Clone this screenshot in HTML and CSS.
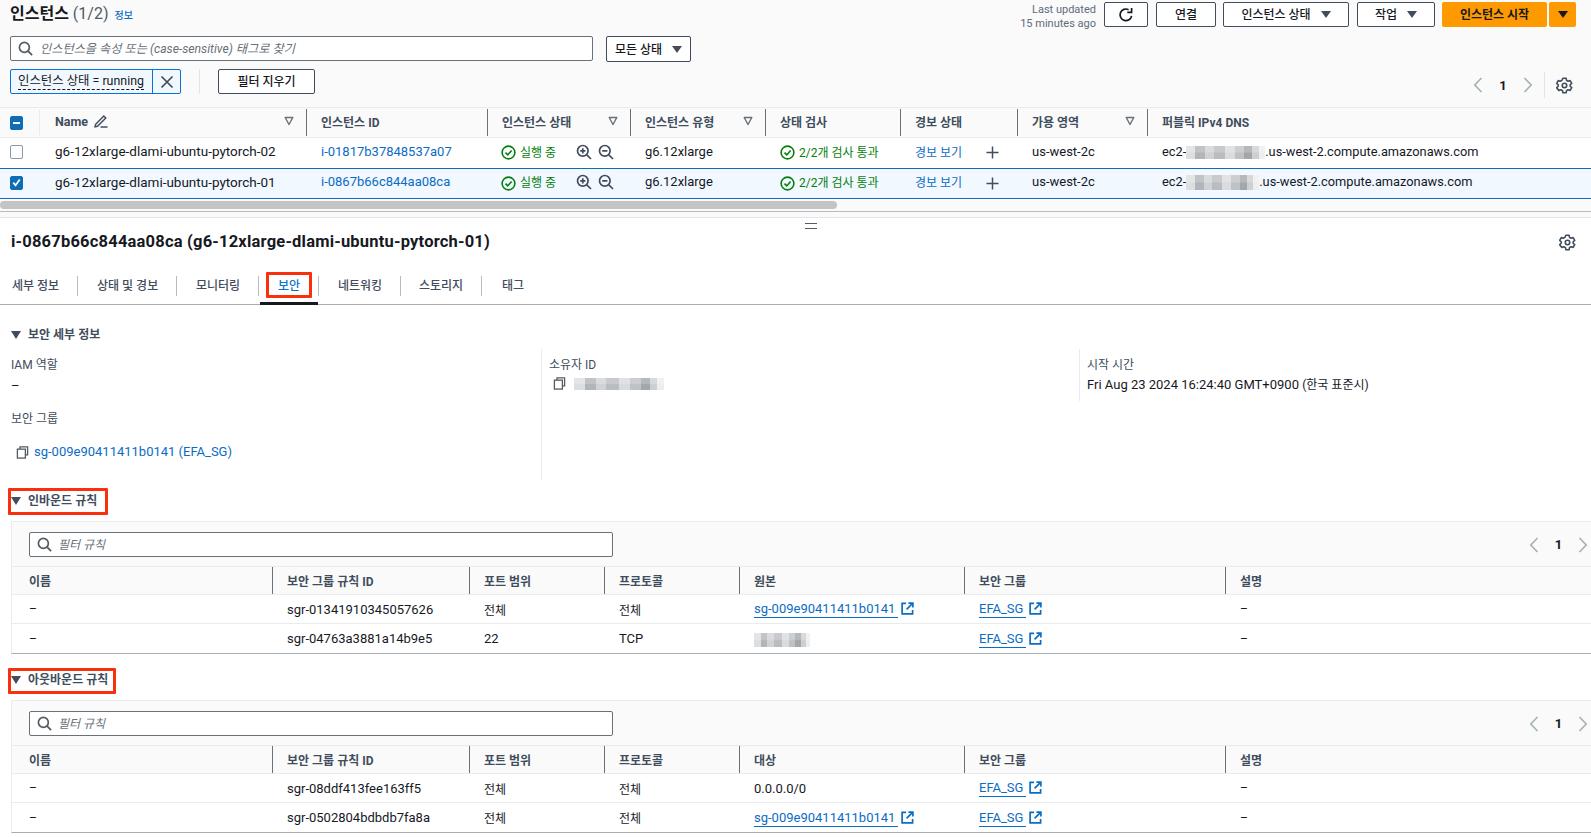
FILE: index.html
```html
<!DOCTYPE html>
<html lang="ko">
<head>
<meta charset="utf-8">
<title>인스턴스</title>
<link rel="stylesheet" href="styles.css">
</head>
<body>
<svg class="sprite" xmlns="http://www.w3.org/2000/svg">
  <symbol id="i-search" viewBox="0 0 16 16"><circle cx="6.8" cy="6.8" r="5.3" fill="none" stroke="currentColor" stroke-width="1.8"/><path d="M10.8 10.8 15 15" fill="none" stroke="currentColor" stroke-width="2"/></symbol>
  <symbol id="i-refresh" viewBox="0 0 16 16"><path d="M13.6 8.8A5.8 5.8 0 1 1 10.6 2.7" fill="none" stroke="currentColor" stroke-width="1.7"/><path d="M13.6 1v4.3H9.3" fill="none" stroke="currentColor" stroke-width="1.7"/></symbol>
  <symbol id="i-gear" viewBox="0 0 16 16"><path d="M6.5 1.2h3l.4 2 1.4.8 2-.6 1.5 2.6-1.5 1.3v1.4l1.5 1.3-1.5 2.6-2-.6-1.4.8-.4 2h-3l-.4-2-1.4-.8-2 .6L.6 10l1.5-1.3V7.3L.6 6l1.5-2.6 2 .6 1.4-.8z" fill="none" stroke="currentColor" stroke-width="1.5" stroke-linejoin="round"/><circle cx="8" cy="8" r="2.1" fill="none" stroke="currentColor" stroke-width="1.5"/></symbol>
  <symbol id="i-check" viewBox="0 0 16 16"><circle cx="8" cy="8" r="6.8" fill="none" stroke="currentColor" stroke-width="1.7"/><path d="M4.8 8.2 7.2 10.6 11.3 5.8" fill="none" stroke="currentColor" stroke-width="1.7"/></symbol>
  <symbol id="i-zoomin" viewBox="0 0 16 16"><circle cx="6.8" cy="6.8" r="5.3" fill="none" stroke="currentColor" stroke-width="1.7"/><path d="M10.8 10.8 15 15M4.2 6.8h5.2M6.8 4.2v5.2" fill="none" stroke="currentColor" stroke-width="1.7"/></symbol>
  <symbol id="i-zoomout" viewBox="0 0 16 16"><circle cx="6.8" cy="6.8" r="5.3" fill="none" stroke="currentColor" stroke-width="1.7"/><path d="M10.8 10.8 15 15M4.2 6.8h5.2" fill="none" stroke="currentColor" stroke-width="1.7"/></symbol>
  <symbol id="i-plus" viewBox="0 0 14 14"><path d="M7 .5v13M.5 7h13" fill="none" stroke="currentColor" stroke-width="1.6"/></symbol>
  <symbol id="i-close" viewBox="0 0 14 14"><path d="M1.5 1.5l11 11M12.5 1.5l-11 11" fill="none" stroke="currentColor" stroke-width="1.7"/></symbol>
  <symbol id="i-copy" viewBox="0 0 14 14"><path d="M4.3 3.2V1h8.2v8.6h-2.2" fill="none" stroke="currentColor" stroke-width="1.4"/><rect x="1.5" y="3.4" width="8.6" height="9.6" fill="none" stroke="currentColor" stroke-width="1.4"/></symbol>
  <symbol id="i-ext" viewBox="0 0 14 14"><path d="M5.5 1.5H1.2v11.300h11.300V8.500" fill="none" stroke="currentColor" stroke-width="1.8"/><path d="M8 1.200h4.800V6M12.500 1.500 6 8" fill="none" stroke="currentColor" stroke-width="1.8"/></symbol>
  <symbol id="i-pencil" viewBox="0 0 14 14"><path d="M1.5 10.5 9.8 1.9l2 2-8.3 8.4-2.5.5zM6.5 13h7" fill="none" stroke="currentColor" stroke-width="1.4"/></symbol>
  <symbol id="i-prev" viewBox="0 0 10 16"><path d="M8.5 1 1.8 8l6.7 7" fill="none" stroke="currentColor" stroke-width="1.6"/></symbol>
  <symbol id="i-next" viewBox="0 0 10 16"><path d="M1.5 1l6.7 7-6.7 7" fill="none" stroke="currentColor" stroke-width="1.6"/></symbol>
  <symbol id="i-sort" viewBox="0 0 10 10"><path d="M1.2 1.5h7.6L5 8.5z" fill="none" stroke="currentColor" stroke-width="1.4" stroke-linejoin="round"/></symbol>
</svg>

<section class="top">
  <header class="bar">
    <h1 class="page-title">인스턴스 <span class="count">(1/2)</span></h1>
    <a class="info">정보</a>
    <div class="actions">
      <div class="updated">Last updated<br>15 minutes ago</div>
      <button class="btn btn-refresh"><svg class="ic16"><use href="#i-refresh"/></svg></button>
      <button class="btn btn-connect">연결</button>
      <button class="btn btn-state">인스턴스 상태<i class="caret"></i></button>
      <button class="btn btn-work">작업<i class="caret"></i></button>
      <button class="btn-primary">인스턴스 시작</button>
      <button class="btn-primary-split"><i class="caret caret-dark"></i></button>
    </div>
  </header>
  <div class="search-row">
    <div class="search search-main"><svg class="ic15"><use href="#i-search"/></svg><span class="placeholder placeholder-main">인스턴스을 속성 또는 (case-sensitive) 태그로 찾기</span></div>
    <button class="btn btn-all">모든 상태<i class="caret"></i></button>
  </div>
  <div class="chip-row">
    <div class="chip"><span class="chip-label"><span class="chip-text">인스턴스 상태 = running</span></span><span class="chip-x"><svg class="ic14"><use href="#i-close"/></svg></span></div>
    <span class="chip-sep"></span>
    <button class="btn btn-clear">필터 지우기</button>
    <div class="pager pager-top">
      <svg class="pg-arrow"><use href="#i-prev"/></svg><b class="pg-num">1</b><svg class="pg-arrow"><use href="#i-next"/></svg>
      <span class="pg-sep"></span>
      <svg class="ic17 gear"><use href="#i-gear"/></svg>
    </div>
  </div>

  <div class="inst-table">
    <div class="inst-row inst-head">
      <div class="th th-check"><span class="cb cb-mixed"></span></div>
      <div class="th"><div class="th-in th-first">Name <svg class="ic14 pencil"><use href="#i-pencil"/></svg><svg class="sort"><use href="#i-sort"/></svg></div></div>
      <div class="th"><div class="th-in">인스턴스 ID</div></div>
      <div class="th"><div class="th-in">인스턴스 상태<svg class="sort"><use href="#i-sort"/></svg></div></div>
      <div class="th"><div class="th-in">인스턴스 유형<svg class="sort"><use href="#i-sort"/></svg></div></div>
      <div class="th"><div class="th-in">상태 검사</div></div>
      <div class="th"><div class="th-in">경보 상태</div></div>
      <div class="th"><div class="th-in">가용 영역<svg class="sort"><use href="#i-sort"/></svg></div></div>
      <div class="th"><div class="th-in">퍼블릭 IPv4 DNS</div></div>
    </div>
    <div class="inst-row inst-body">
      <div class="td td-check"><span class="cb"></span></div>
      <div class="td val name-val">g6-12xlarge-dlami-ubuntu-pytorch-02</div>
      <div class="td val"><a class="link">i-01817b37848537a07</a></div>
      <div class="td ok ok-state"><svg class="ic15"><use href="#i-check"/></svg><span class="ok-text">실행 중</span><svg class="ic16 zoom zoom-first"><use href="#i-zoomin"/></svg><svg class="ic16 zoom"><use href="#i-zoomout"/></svg></div>
      <div class="td val">g6.12xlarge</div>
      <div class="td ok"><svg class="ic15"><use href="#i-check"/></svg><span class="ok-text">2/2개 검사 통과</span></div>
      <div class="td"><a class="link link-ko">경보 보기</a><svg class="ic13 plus"><use href="#i-plus"/></svg></div>
      <div class="td val">us-west-2c</div>
      <div class="td val dns">ec2-<span class="blur blur-dns1"></span>.us-west-2.compute.amazonaws.com</div>
    </div>
    <div class="inst-row inst-body inst-selected">
      <div class="td td-check"><span class="cb cb-on"><svg viewBox="0 0 12 12"><path d="M2.5 6.2 5 9 9.5 2.8" fill="none" stroke="#fff" stroke-width="1.9"/></svg></span></div>
      <div class="td val name-val">g6-12xlarge-dlami-ubuntu-pytorch-01</div>
      <div class="td val"><a class="link">i-0867b66c844aa08ca</a></div>
      <div class="td ok ok-state"><svg class="ic15"><use href="#i-check"/></svg><span class="ok-text">실행 중</span><svg class="ic16 zoom zoom-first"><use href="#i-zoomin"/></svg><svg class="ic16 zoom"><use href="#i-zoomout"/></svg></div>
      <div class="td val">g6.12xlarge</div>
      <div class="td ok"><svg class="ic15"><use href="#i-check"/></svg><span class="ok-text">2/2개 검사 통과</span></div>
      <div class="td"><a class="link link-ko">경보 보기</a><svg class="ic13 plus"><use href="#i-plus"/></svg></div>
      <div class="td val">us-west-2c</div>
      <div class="td val dns">ec2-<span class="blur blur-dns2"></span>.us-west-2.compute.amazonaws.com</div>
    </div>
  </div>
  <div class="scrollbar"><div class="scroll-thumb"></div></div>
</section>

<section class="detail">
  <div class="handle"><span class="handle-lines"></span></div>
  <div class="detail-title">
    <h2 class="detail-h">i-0867b66c844aa08ca (g6-12xlarge-dlami-ubuntu-pytorch-01)</h2>
    <svg class="ic17 gear"><use href="#i-gear"/></svg>
  </div>
  <nav class="tabs">
    <a class="tab tab-1">세부 정보</a>
    <a class="tab tab-2">상태 및 경보</a>
    <a class="tab tab-3">모니터링</a>
    <a class="tab tab-4 tab-active"><span class="tab-mark">보안</span></a>
    <a class="tab tab-5">네트워킹</a>
    <a class="tab tab-6">스토리지</a>
    <a class="tab tab-7">태그</a>
  </nav>

  <h3 class="sec-head sec-plain"><i class="caret caret-sec"></i>보안 세부 정보</h3>
  <div class="kv">
    <div class="kv-col kv-1">
      <div class="k">IAM 역할</div>
      <div class="v v-dash">–</div>
      <div class="k k-second">보안 그룹</div>
      <div class="v v-sg"><svg class="ic13 copy"><use href="#i-copy"/></svg><a class="link">sg-009e90411411b0141 (EFA_SG)</a></div>
    </div>
    <div class="kv-col kv-2">
      <div class="k">소유자 ID</div>
      <div class="v v-owner"><svg class="ic13 copy"><use href="#i-copy"/></svg><span class="blur blur-owner"></span></div>
    </div>
    <div class="kv-col kv-3">
      <div class="k">시작 시간</div>
      <div class="v v-date">Fri Aug 23 2024 16:24:40 GMT+0900 <span class="ko-small">(한국 표준시)</span></div>
    </div>
  </div>

  <h3 class="sec-head sec-marked sec-in"><i class="caret caret-sec"></i>인바운드 규칙</h3>
  <div class="panel">
    <div class="panel-bar">
      <div class="search search-rule"><svg class="ic15"><use href="#i-search"/></svg><span class="placeholder">필터 규칙</span></div>
      <div class="pager pager-rule"><svg class="pg-arrow"><use href="#i-prev"/></svg><b class="pg-num">1</b><svg class="pg-arrow"><use href="#i-next"/></svg></div>
    </div>
    <div class="rule-row rule-head">
      <div class="rh rh-first">이름</div>
      <div class="rh"><div class="th-in">보안 그룹 규칙 ID</div></div>
      <div class="rh"><div class="th-in">포트 범위</div></div>
      <div class="rh"><div class="th-in">프로토콜</div></div>
      <div class="rh"><div class="th-in">원본</div></div>
      <div class="rh"><div class="th-in">보안 그룹</div></div>
      <div class="rh"><div class="th-in">설명</div></div>
    </div>
    <div class="rule-row rule-body">
      <div class="rd rd-first">–</div>
      <div class="rd val">sgr-01341910345057626</div>
      <div class="rd">전체</div>
      <div class="rd">전체</div>
      <div class="rd val"><a class="ext-link"><span>sg-009e90411411b0141</span><svg class="ic13"><use href="#i-ext"/></svg></a></div>
      <div class="rd val"><a class="ext-link"><span>EFA_SG</span><svg class="ic13"><use href="#i-ext"/></svg></a></div>
      <div class="rd">–</div>
    </div>
    <div class="rule-row rule-body rule-last">
      <div class="rd rd-first">–</div>
      <div class="rd val">sgr-04763a3881a14b9e5</div>
      <div class="rd val">22</div>
      <div class="rd val">TCP</div>
      <div class="rd val"><span class="blur blur-src"></span></div>
      <div class="rd val"><a class="ext-link"><span>EFA_SG</span><svg class="ic13"><use href="#i-ext"/></svg></a></div>
      <div class="rd">–</div>
    </div>
  </div>

  <h3 class="sec-head sec-marked sec-out"><i class="caret caret-sec"></i>아웃바운드 규칙</h3>
  <div class="panel">
    <div class="panel-bar">
      <div class="search search-rule"><svg class="ic15"><use href="#i-search"/></svg><span class="placeholder">필터 규칙</span></div>
      <div class="pager pager-rule"><svg class="pg-arrow"><use href="#i-prev"/></svg><b class="pg-num">1</b><svg class="pg-arrow"><use href="#i-next"/></svg></div>
    </div>
    <div class="rule-row rule-head">
      <div class="rh rh-first">이름</div>
      <div class="rh"><div class="th-in">보안 그룹 규칙 ID</div></div>
      <div class="rh"><div class="th-in">포트 범위</div></div>
      <div class="rh"><div class="th-in">프로토콜</div></div>
      <div class="rh"><div class="th-in">대상</div></div>
      <div class="rh"><div class="th-in">보안 그룹</div></div>
      <div class="rh"><div class="th-in">설명</div></div>
    </div>
    <div class="rule-row rule-body">
      <div class="rd rd-first">–</div>
      <div class="rd val">sgr-08ddf413fee163ff5</div>
      <div class="rd">전체</div>
      <div class="rd">전체</div>
      <div class="rd val">0.0.0.0/0</div>
      <div class="rd val"><a class="ext-link"><span>EFA_SG</span><svg class="ic13"><use href="#i-ext"/></svg></a></div>
      <div class="rd">–</div>
    </div>
    <div class="rule-row rule-body rule-last">
      <div class="rd rd-first">–</div>
      <div class="rd val">sgr-0502804bdbdb7fa8a</div>
      <div class="rd">전체</div>
      <div class="rd">전체</div>
      <div class="rd val"><a class="ext-link"><span>sg-009e90411411b0141</span><svg class="ic13"><use href="#i-ext"/></svg></a></div>
      <div class="rd val"><a class="ext-link"><span>EFA_SG</span><svg class="ic13"><use href="#i-ext"/></svg></a></div>
      <div class="rd">–</div>
    </div>
  </div>
</section>
</body>
</html>
```
FILE: styles.css
```css
* { box-sizing: border-box; }
html, body { margin: 0; padding: 0; height: 837px; overflow: hidden; }
body {
  font-family: Roboto, "Noto Sans CJK KR", sans-serif;
  font-size: 12px;
  color: #16191f;
  background: #fff;
}
.sprite { width: 0; height: 0; position: absolute; }
h1, h2, h3 { margin: 0; }
svg { flex: none; display: block; }
.ic13 { width: 13px; height: 13px; }
.ic14 { width: 14px; height: 14px; }
.ic15 { width: 15px; height: 15px; }
.ic16 { width: 16px; height: 16px; }
.ic17 { width: 17px; height: 17px; }

/* top list panel */
.top { height: 218px; background: #fafafa; border-bottom: 1px solid #e3e5e7; }
.bar { height: 36px; display: flex; align-items: flex-start; padding: 0 15px 0 10px; }
.page-title { font-size: 16px; font-weight: 700; line-height: 28px; color: #16191f; }
.count { font-weight: 400; color: #545b64; }
.info { font-size: 10px; color: #0b6cc4; margin: 7px 0 0 6px; line-height: 18px; font-weight: 500; }
.actions { margin-left: auto; display: flex; align-items: flex-start; padding-top: 2px; }
.updated { font-size: 11px; line-height: 14px; color: #5f6b7a; text-align: right; margin-right: 8px; margin-top: 1px; }
.btn {
  height: 25px; border: 1px solid #414d5c; border-radius: 2px; background: #fff;
  font: 500 12px Roboto, "Noto Sans CJK KR", sans-serif; color: #16191f;
  display: flex; align-items: center; justify-content: center; padding: 0 0 2px;
}
.btn-refresh { width: 44px; margin-right: 8px; padding: 0; }
.btn-connect { width: 60px; margin-right: 7px; }
.btn-state { width: 126px; margin-right: 8px; }
.btn-work { width: 78px; margin-right: 7px; }
.btn-primary, .btn-primary-split {
  height: 25px; border: 0; border-radius: 2px; background: #f90;
  font: 700 12px Roboto, "Noto Sans CJK KR", sans-serif; color: #16191f; padding: 0 0 2px;
  display: flex; align-items: center; justify-content: center;
}
.btn-primary { width: 105px; margin-right: 2px; }
.btn-primary-split { width: 27px; padding: 0; }
.caret { display: inline-block; width: 0; height: 0; border: 5px solid transparent; border-top: 7px solid #414d5c; border-bottom: 0; margin-left: 10px; margin-top: 2px; }
.caret-dark { border-top-color: #16191f; margin-left: 0; margin-top: 0; }
.caret-sec { margin: 0 7px 0 0; border-width: 5px; border-top-width: 8px; border-bottom-width: 0; }

.search-row { height: 33px; display: flex; padding-left: 10px; }
.search {
  height: 25px; border: 1px solid #687078; border-radius: 2px; background: #fff;
  display: flex; align-items: center; padding-left: 7px; color: #545b64;
}
.search-main { width: 583px; margin-right: 13px; }
.search-rule { width: 584px; }
.placeholder { font-style: italic; font-size: 12px; color: #687078; margin: 0 0 2px 6px; }
.placeholder-main { font-size: 12.2px; margin-left: 7px; }
.btn-all { width: 85px; height: 26px; }

.chip-row { height: 38px; display: flex; align-items: flex-start; padding-left: 10px; }
.chip { width: 171px; height: 25px; display: flex; border: 1px solid #0972d3; border-radius: 2px; background: #f1f8fd; }
.chip-label { flex: 1; display: flex; align-items: flex-start; padding: 2px 0 0 7px; border-right: 1px solid #0972d3; }
.chip-text { font-size: 12.4px; line-height: 17px; border-bottom: 1px dashed #16191f; white-space: nowrap; font-weight: 400; }
.chip-x { width: 27px; display: flex; align-items: center; justify-content: center; color: #414d5c; }
.chip-sep { width: 1px; height: 25px; background: #e3e5e7; margin: 0 18px; }
.btn-clear { width: 97px; }
.pager { display: flex; align-items: center; }
.pager-top { margin-left: auto; margin-top: 3px; height: 26px; padding-right: 18px; }
.pg-arrow { width: 10px; height: 16px; color: #a3b0b5; }
.pg-num { width: 40px; text-align: center; font-size: 13px; font-weight: 700; color: #16191f; }
.pg-sep { width: 1px; height: 26px; background: #e3e5e7; margin: 0 11px; }
.gear { color: #414d5c; }

/* instances table */
.inst-table { border-top: 1px solid #e9ebed; }
.inst-row { display: grid; grid-template-columns: 40px 266px 181px 143px 135px 135px 117px 130px 1fr; }
.inst-head { height: 30px; border-bottom: 1px solid #e9ebed; }
.th { display: flex; align-items: center; min-width: 0; }
.th-check { padding-left: 10px; position: relative; }
.th-check::after { content: ""; position: absolute; right: 0; top: 2px; height: 25px; width: 1px; background: #e9ebed; }
.th-in {
  flex: 1; height: 27px; display: flex; align-items: center; padding: 0 15px 0 14px;
  border-left: 1px solid #687078; font-weight: 700; color: #414d5c; font-size: 12px;
  justify-content: flex-start; white-space: nowrap; min-width: 0;
}
.inst-head .th-in { padding-bottom: 3px; }
.th-first { border-left: 0; padding-left: 15px; font-size: 12.5px; }
.pencil { margin-left: 6px; color: #414d5c; }
.sort { width: 10px; height: 10px; margin-left: auto; color: #687078; margin-right: -3px; }
.inst-body { height: 30px; background: #fff; }
.inst-selected { height: 31px; background: #f1f8ff; border-top: 1px solid #0f6cb5; border-bottom: 1px solid #0f6cb5; }
.td { display: flex; align-items: center; padding: 0 0 4px 15px; white-space: nowrap; min-width: 0; }
.td-check { padding: 0 0 2px 10px; }
.val { font-size: 13px; }
.name-val { font-size: 13.5px; }
.dns { font-size: 12.8px; }
.cb { width: 13px; height: 14px; border: 1px solid #8d99a8; border-radius: 2px; background: #fff; display: block; }
.cb-mixed { background: #0f6cb5; border-color: #0f6cb5; position: relative; }
.cb-mixed::after { content: ""; position: absolute; left: 2px; right: 2px; top: 5px; height: 2px; background: #fff; }
.cb-on { background: #0f6cb5; border-color: #0f6cb5; }
.link { color: #0b6cc4; font-size: inherit; }
.link-ko { font-size: 12px; }
.ok { color: #037f0c; font-size: 12px; padding-left: 15px; }
.ok-state { padding-left: 14px; }
.ok .ic15 { margin-top: 3px; }
.ok-text { margin-left: 4px; }
.zoom { color: #414d5c; margin: 1px 0 0 6px; }
.zoom-first { margin-left: 20px; }
.plus { color: #414d5c; margin: 3px 0 0 24px; }
.blur {
  display: inline-block; filter: blur(.7px);
  background:
    linear-gradient(180deg, rgba(255,255,255,.2) 0 45%, rgba(255,255,255,0) 55%),
    linear-gradient(90deg, #dcdee0 0 12%, #b2b5b9 12% 24%, #d0d2d4 24% 36%, #babdc0 36% 50%, #d9dbdd 50% 62%, #bfc2c5 62% 74%, #a3a7ab 74% 84%, #cdcfd1 84% 92%, #eceeef 92%);
}
.blur-dns1 { width: 79px; height: 13px; margin-top: 2px; }
.blur-dns2 { width: 73px; height: 15px; margin-top: 2px; }
.blur-owner { width: 90px; height: 12px; margin-left: 8px; }
.blur-src { width: 56px; height: 14px; margin-top: 2px; }

.scrollbar { height: 13px; padding-top: 1px; border-bottom: 1px solid #b6bcc4; }
.scroll-thumb { width: 837px; height: 8px; margin-top: 1px; border-radius: 4px; background: #c4c4c4; }

/* split panel */
.handle { height: 13px; display: flex; justify-content: center; padding: 5px 0 0 31px; }
.handle-lines { width: 12px; height: 6px; border-top: 1.5px solid #545b64; border-bottom: 1.5px solid #545b64; }
.detail-title { height: 22px; display: flex; align-items: center; padding: 0 15px 0 11px; justify-content: space-between; }
.detail-h { font-size: 16.5px; letter-spacing: .2px; font-weight: 700; line-height: 22px; }

.tabs { height: 52px; padding-top: 14px; display: flex; border-bottom: 1px solid #a5adb5; }
.tab { display: flex; align-items: center; height: 37px; padding: 0 0 2px 20px; font-size: 12px; font-weight: 500; color: #414d5c; position: relative; white-space: nowrap; }
.tab::after { content: ""; position: absolute; right: 0; top: 9px; height: 20px; width: 1px; background: #b6bcc4; }
.tab-1 { width: 78px; padding-left: 12px; }
.tab-2 { width: 99px; padding-left: 19px; }
.tab-3 { width: 82px; padding-left: 19px; }
.tab-4 { width: 60px; padding: 0 0 0 7px; color: #0972d3; }
.tab-5 { width: 82px; padding-left: 19px; }
.tab-6 { width: 81px; padding-left: 18px; }
.tab-7 { width: 60px; }
.tab-7::after { display: none; }
.tab-active::before { content: ""; position: absolute; left: 1px; right: 1px; bottom: -1px; height: 3px; background: #16191f; }
.tab-mark { border: 3px solid #f9300e; height: 26px; width: 46px; display: flex; align-items: center; justify-content: center; margin-top: -1px; padding-bottom: 2px; border-radius: 1px; }

.sec-head { font-size: 12px; font-weight: 700; color: #414d5c; display: flex; align-items: center; line-height: 18px; }
.sec-head .caret-sec { margin-left: 0; }
.sec-plain { padding: 21px 0 0 11px; }

.kv { display: grid; grid-template-columns: 541px 538px 1fr; height: 131px; margin-top: 5px; }
.kv-col { padding-top: 8px; }
.kv-1 { padding-left: 11px; }
.kv-2, .kv-3 { padding-left: 7px; border-left: 1px solid #e9ebed; }
.kv-3 { height: 52px; }
.kv-2 { height: 131px; }
.k { font-size: 12px; line-height: 16px; color: #414d5c; }
.k-second { margin-top: 18px; }
.v { font-size: 13px; line-height: 20px; margin-top: 3px; color: #16191f; }
.v-date { margin-top: 2px; }
.v-dash { height: 17px; }
.v-sg { display: flex; align-items: center; margin-top: 15px; padding-left: 5px; }
.v-sg .link { margin-left: 5px; }
.v-owner { display: flex; align-items: center; padding-left: 4px; margin-top: 4px; }
.copy { color: #545b64; }
.ko-small { font-size: 12px; }

.sec-marked { border: 3px solid #f9300e; border-radius: 1px; margin-left: 8px; padding: 0 0 2px; }
.sec-in { width: 100px; height: 27px; margin-top: 8px; }
.sec-out { width: 108px; height: 26px; margin-top: 14px; }

.panel { margin: 6px 0 0 11px; border-left: 1px solid #e9ebed; border-bottom: 1px solid #a5adb5; }
.panel-bar { height: 45px; background: #fafafa; border-top: 1px solid #e9ebed; display: flex; align-items: flex-start; padding: 10px 0 0 17px; }
.pager-rule { margin-left: auto; height: 25px; padding-right: 3px; }
.pager-rule .pg-num { width: 39px; }
.rule-row { display: grid; grid-template-columns: 260px 197px 135px 135px 225px 261px 1fr; }
.rule-head { height: 29px; background: #fafafa; border-top: 1px solid #e9ebed; border-bottom: 1px solid #e9ebed; }
.rh { display: flex; align-items: center; min-width: 0; font-weight: 700; color: #414d5c; }
.rh-first { padding-left: 17px; }
.rule-body { height: 29px; border-bottom: 1px solid #e9ebed; }
.rule-last { border-bottom: 0; }
.rd { display: flex; align-items: center; padding-left: 15px; color: #16191f; white-space: nowrap; min-width: 0; }
.rd-first { padding-left: 17px; }
.ext-link { display: inline-flex; align-items: center; color: #0b6cc4; margin-top: 1px; }
.ext-link span { border-bottom: 1px solid #0b6cc4; line-height: 16px; padding-right: 3px; }
.ext-link svg { margin: -2px 0 0 3px; }
```
